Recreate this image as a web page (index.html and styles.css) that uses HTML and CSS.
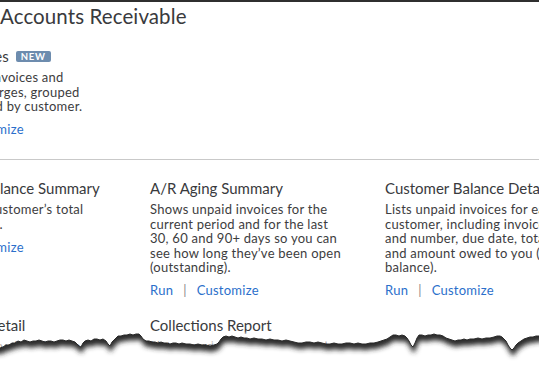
FILE: index.html
```html
<!DOCTYPE html>
<html>
<head>
<meta charset="utf-8">
<link rel="stylesheet" href="styles.css">
</head>
<body>
<div class="page">
  <div class="topline"></div>
  <h1 class="section-title">Accounts Receivable</h1>

  <div class="report-grid first">
    <div class="report">
      <h2 class="report-title">Open Invoices <span class="badge">NEW</span></h2>
      <p class="report-desc">Shows open invoices and statement charges, grouped and&nbsp;subtotaled by customer.</p>
      <div class="report-links"><a class="link">Run</a><span class="sep">|</span><a class="link">Customize</a></div>
    </div>
  </div>

  <div class="divider"></div>

  <div class="report-grid">
    <div class="report">
      <h2 class="report-title">Customer Balance Summary</h2>
      <p class="report-desc">Shows each customer’s total open balances.</p>
      <div class="report-links"><a class="link">Run</a><span class="sep">|</span><a class="link">Customize</a></div>
    </div>
    <div class="report">
      <h2 class="report-title">A/R Aging Summary</h2>
      <p class="report-desc">Shows unpaid invoices for the current period and for the last 30, 60 and 90+ days so you can see how long they’ve been open (outstanding).</p>
      <div class="report-links"><a class="link">Run</a><span class="sep">|</span><a class="link">Customize</a></div>
    </div>
    <div class="report">
      <h2 class="report-title">Customer Balance Detail</h2>
      <p class="report-desc">Lists unpaid invoices for each customer, including invoice date and number, due date, total and&nbsp;amount owed to you (open balance).</p>
      <div class="report-links"><a class="link">Run</a><span class="sep">|</span><a class="link">Customize</a></div>
    </div>
    <div class="report">
      <h2 class="report-title">A/R Aging Detail</h2>
      <p class="report-desc">Lists unpaid invoices for the current period and for the last 30, 60 and 90+ days.</p>
    </div>
    <div class="report">
      <h2 class="report-title">Collections Report</h2>
      <p class="report-desc">Lists overdue invoices for each customer with contact details.</p>
    </div>
  </div>

  <svg class="tear" width="539" height="377" viewBox="0 0 539 377" aria-hidden="true">
    <defs>
      <filter id="blur" x="-5%" y="-50%" width="110%" height="200%">
        <feGaussianBlur stdDeviation="2.4"/>
      </filter>
      <filter id="soft" x="-5%" y="-100%" width="110%" height="300%">
        <feGaussianBlur stdDeviation="1.3"/>
      </filter>
      <clipPath id="below">
        <polygon points="0,348 3,347 6,345 9,345 12,343 15,343 18,341 21,342 24,340 27,341 30,342 33,341 36,341 39,340 42,341 45,342 48,341 51,341 54,342 57,341 60,340 63,340 66,341 69,340 72,341 75,342 77,344 79,346 81,347 83,343 85,341 88,340 91,341 94,339 97,339 100,340 103,339 106,341 108,344 110,346 112,342 115,339 118,336 121,336 124,335 127,335 130,334 133,335 136,334 139,334 141,336 143,339 146,341 149,341 152,342 155,342 158,343 161,342 164,343 167,343 170,344 173,343 176,343 179,344 182,343 186,344 190,344 194,345 198,344 202,345 206,345 210,346 214,345 217,344 219,342 221,339 223,337 226,336 229,337 232,336 235,337 238,338 241,337 244,338 247,338 250,339 254,338 258,339 262,339 266,340 270,339 274,340 278,340 282,341 286,340 290,341 294,342 298,343 302,343 306,342 310,342 314,343 318,342 322,343 326,344 330,344 334,343 338,344 342,344 346,343 350,343 354,344 358,343 362,344 366,344 370,343 374,343 378,342 381,341 384,340 387,339 390,337 393,335 396,335 399,336 402,335 405,336 407,338 409,341 411,345 413,347 415,343 417,338 419,335 422,335 425,336 428,335 431,335 434,334 437,335 440,335 443,336 446,338 449,339 452,340 455,341 458,340 461,340 464,339 467,340 470,339 474,339 478,338 482,339 486,338 490,338 494,337 497,336 500,336 502,337 504,339 506,341 508,345 510,348 512,350 514,348 516,345 518,343 521,341 524,339 527,338 530,337 533,337 536,336 539,336 539,377 0,377"/>
      </clipPath>
    </defs>
    <polyline fill="none" stroke="#fff" stroke-width="4" opacity="0.85" filter="url(#soft)" transform="translate(0,-3)" points="0,348 3,347 6,345 9,345 12,343 15,343 18,341 21,342 24,340 27,341 30,342 33,341 36,341 39,340 42,341 45,342 48,341 51,341 54,342 57,341 60,340 63,340 66,341 69,340 72,341 75,342 77,344 79,346 81,347 83,343 85,341 88,340 91,341 94,339 97,339 100,340 103,339 106,341 108,344 110,346 112,342 115,339 118,336 121,336 124,335 127,335 130,334 133,335 136,334 139,334 141,336 143,339 146,341 149,341 152,342 155,342 158,343 161,342 164,343 167,343 170,344 173,343 176,343 179,344 182,343 186,344 190,344 194,345 198,344 202,345 206,345 210,346 214,345 217,344 219,342 221,339 223,337 226,336 229,337 232,336 235,337 238,338 241,337 244,338 247,338 250,339 254,338 258,339 262,339 266,340 270,339 274,340 278,340 282,341 286,340 290,341 294,342 298,343 302,343 306,342 310,342 314,343 318,342 322,343 326,344 330,344 334,343 338,344 342,344 346,343 350,343 354,344 358,343 362,344 366,344 370,343 374,343 378,342 381,341 384,340 387,339 390,337 393,335 396,335 399,336 402,335 405,336 407,338 409,341 411,345 413,347 415,343 417,338 419,335 422,335 425,336 428,335 431,335 434,334 437,335 440,335 443,336 446,338 449,339 452,340 455,341 458,340 461,340 464,339 467,340 470,339 474,339 478,338 482,339 486,338 490,338 494,337 497,336 500,336 502,337 504,339 506,341 508,345 510,348 512,350 514,348 516,345 518,343 521,341 524,339 527,338 530,337 533,337 536,336 539,336"/>
    <rect x="0" y="300" width="539" height="77" fill="#fff" clip-path="url(#below)"/>
    <g clip-path="url(#below)">
      <polygon transform="translate(1,6)" fill="#2a2a2a" filter="url(#blur)" points="-10,290 -10,348 0,348 3,347 6,345 9,345 12,343 15,343 18,341 21,342 24,340 27,341 30,342 33,341 36,341 39,340 42,341 45,342 48,341 51,341 54,342 57,341 60,340 63,340 66,341 69,340 72,341 75,342 77,344 79,346 81,347 83,343 85,341 88,340 91,341 94,339 97,339 100,340 103,339 106,341 108,344 110,346 112,342 115,339 118,336 121,336 124,335 127,335 130,334 133,335 136,334 139,334 141,336 143,339 146,341 149,341 152,342 155,342 158,343 161,342 164,343 167,343 170,344 173,343 176,343 179,344 182,343 186,344 190,344 194,345 198,344 202,345 206,345 210,346 214,345 217,344 219,342 221,339 223,337 226,336 229,337 232,336 235,337 238,338 241,337 244,338 247,338 250,339 254,338 258,339 262,339 266,340 270,339 274,340 278,340 282,341 286,340 290,341 294,342 298,343 302,343 306,342 310,342 314,343 318,342 322,343 326,344 330,344 334,343 338,344 342,344 346,343 350,343 354,344 358,343 362,344 366,344 370,343 374,343 378,342 381,341 384,340 387,339 390,337 393,335 396,335 399,336 402,335 405,336 407,338 409,341 411,345 413,347 415,343 417,338 419,335 422,335 425,336 428,335 431,335 434,334 437,335 440,335 443,336 446,338 449,339 452,340 455,341 458,340 461,340 464,339 467,340 470,339 474,339 478,338 482,339 486,338 490,338 494,337 497,336 500,336 502,337 504,339 506,341 508,345 510,348 512,350 514,348 516,345 518,343 521,341 524,339 527,338 530,337 533,337 536,336 539,336 550,336 550,290"/>
    </g>
    <polyline fill="none" stroke="#2a2a2a" stroke-width="1" points="0,348 3,347 6,345 9,345 12,343 15,343 18,341 21,342 24,340 27,341 30,342 33,341 36,341 39,340 42,341 45,342 48,341 51,341 54,342 57,341 60,340 63,340 66,341 69,340 72,341 75,342 77,344 79,346 81,347 83,343 85,341 88,340 91,341 94,339 97,339 100,340 103,339 106,341 108,344 110,346 112,342 115,339 118,336 121,336 124,335 127,335 130,334 133,335 136,334 139,334 141,336 143,339 146,341 149,341 152,342 155,342 158,343 161,342 164,343 167,343 170,344 173,343 176,343 179,344 182,343 186,344 190,344 194,345 198,344 202,345 206,345 210,346 214,345 217,344 219,342 221,339 223,337 226,336 229,337 232,336 235,337 238,338 241,337 244,338 247,338 250,339 254,338 258,339 262,339 266,340 270,339 274,340 278,340 282,341 286,340 290,341 294,342 298,343 302,343 306,342 310,342 314,343 318,342 322,343 326,344 330,344 334,343 338,344 342,344 346,343 350,343 354,344 358,343 362,344 366,344 370,343 374,343 378,342 381,341 384,340 387,339 390,337 393,335 396,335 399,336 402,335 405,336 407,338 409,341 411,345 413,347 415,343 417,338 419,335 422,335 425,336 428,335 431,335 434,334 437,335 440,335 443,336 446,338 449,339 452,340 455,341 458,340 461,340 464,339 467,340 470,339 474,339 478,338 482,339 486,338 490,338 494,337 497,336 500,336 502,337 504,339 506,341 508,345 510,348 512,350 514,348 516,345 518,343 521,341 524,339 527,338 530,337 533,337 536,336 539,336"/>
  </svg>
</div>
</body>
</html>
```

FILE: styles.css
```css
html, body {
  margin: 0;
  padding: 0;
  background: #fff;
}
body {
  width: 539px;
  height: 377px;
  overflow: hidden;
  font-family: Lato, "Noto Sans", sans-serif;
  color: #3b3b3d;
}
.page {
  position: relative;
  width: 539px;
  height: 377px;
  overflow: hidden;
}
.topline {
  height: 2px;
  background: #2f2f2f;
}
.section-title {
  margin: 2px 0 0 0;
  font-size: 20.5px;
  line-height: 25px;
  font-weight: 400;
  letter-spacing: 0.1px;
  color: #393a3d;
}
.report-grid {
  margin-left: -85px;
  display: grid;
  grid-template-columns: repeat(3, 195px);
  column-gap: 40px;
  row-gap: 17px;
}
.report-grid.first {
  margin-top: 17px;
}
.report-title {
  margin: 0;
  font-size: 15px;
  line-height: 20px;
  font-weight: 400;
  white-space: nowrap;
  color: #393a3d;
}
.badge {
  display: inline-block;
  vertical-align: 2px;
  margin-left: 3px;
  padding: 0 5px;
  height: 11px;
  line-height: 11px;
  font-size: 9.5px;
  font-weight: 700;
  letter-spacing: 0.8px;
  color: #fff;
  background: #6d8cae;
  border-radius: 2px;
}
.report-desc {
  margin: 4px 0 0 0;
  font-size: 13px;
  line-height: 14.5px;
  letter-spacing: 0.25px;
  color: #3d3d40;
}
.report-links {
  margin-top: 7.5px;
  font-size: 13px;
  line-height: 16px;
  letter-spacing: 0.25px;
  display: flex;
  align-items: baseline;
}
.link {
  color: #2b6fcb;
  text-decoration: none;
}
.sep {
  color: #8a8a8a;
  margin: 0 10px;
}
.divider {
  margin-top: 22px;
  height: 1px;
  background: #c9c9c9;
  margin-bottom: 18px;
}
.tear {
  position: absolute;
  left: 0;
  top: 0;
  pointer-events: none;
}
```
